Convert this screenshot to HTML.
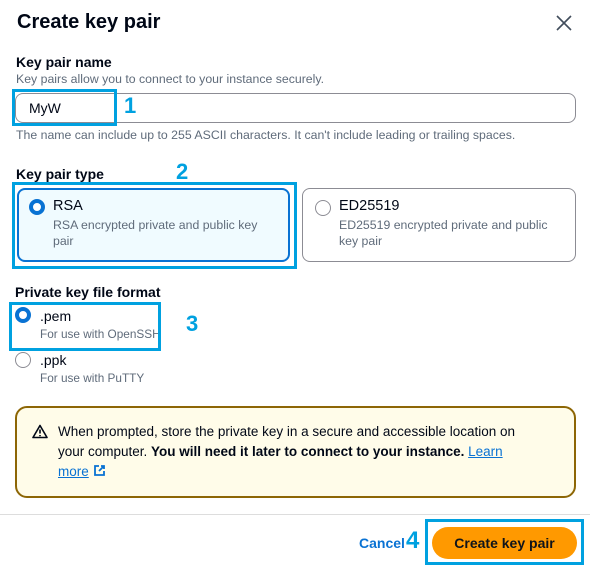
<!DOCTYPE html>
<html><head><meta charset="utf-8"><style>
*{margin:0;padding:0;box-sizing:border-box}
body{width:590px;height:565px;background:#fff;font-family:"Liberation Sans",sans-serif;color:#000716;position:relative;overflow:hidden}
.a{position:absolute;white-space:nowrap}
.lbl{font-size:14px;font-weight:bold}
.hint{font-size:12.3px;color:#5f6b7a}
.ann{position:absolute;border:3px solid #00a1e0}
.num{position:absolute;color:#00a1e0;font-weight:bold;font-size:22px}
.tile{position:absolute;border:1px solid #8c8c94;border-radius:8px}
.rad{position:absolute;width:16px;height:16px;border-radius:50%;border:1px solid #8c8c94;background:#fff}
.rad.on{border:4.5px solid #0972d3}
</style></head><body>
<div class="a" style="left:17px;top:11px;font-size:20px;font-weight:bold">Create key pair</div>
<svg class="a" style="left:555px;top:14px" width="18" height="18"><path d="M2 2L16 16M16 2L2 16" stroke="#414d5c" stroke-width="1.6"/></svg>
<div class="a lbl" style="left:16px;top:54px">Key pair name</div>
<div class="a hint" style="left:16px;top:72px">Key pairs allow you to connect to your instance securely.</div>
<div class="a" style="left:15px;top:93px;width:561px;height:30px;border:1px solid #8c8c94;border-radius:8px"></div>
<div class="a" style="left:29px;top:100px;font-size:14px">MyW</div>
<div class="ann" style="left:12px;top:89px;width:105px;height:37px"></div>
<div class="num" style="left:124px;top:93px">1</div>
<div class="a hint" style="left:16px;top:128px">The name can include up to 255 ASCII characters. It can't include leading or trailing spaces.</div>
<div class="a lbl" style="left:16px;top:166px">Key pair type</div>
<div class="num" style="left:176px;top:159px">2</div>
<div class="tile" style="left:17px;top:188px;width:273px;height:74px;border:2px solid #0972d3;background:#f0fbff"></div>
<div class="rad on" style="left:29px;top:199px"></div>
<div class="a" style="left:53px;top:198px;font-size:14.5px">RSA</div>
<div class="a hint" style="left:53px;top:217px;line-height:16px;white-space:normal;width:225px">RSA encrypted private and public key pair</div>
<div class="ann" style="left:12px;top:182px;width:285px;height:87px"></div>
<div class="tile" style="left:302px;top:188px;width:274px;height:74px"></div>
<div class="rad" style="left:315px;top:200px"></div>
<div class="a" style="left:339px;top:198px;font-size:14.5px">ED25519</div>
<div class="a hint" style="left:339px;top:217px;line-height:16px;white-space:normal;width:225px">ED25519 encrypted private and public key pair</div>
<div class="a lbl" style="left:15px;top:284px">Private key file format</div>
<div class="rad on" style="left:15px;top:307px"></div>
<div class="a" style="left:40px;top:308px;font-size:14px">.pem</div>
<div class="a hint" style="left:40px;top:327px;font-size:11.8px">For use with OpenSSH</div>
<div class="ann" style="left:9px;top:302px;width:152px;height:49px"></div>
<div class="num" style="left:186px;top:311px">3</div>
<div class="rad" style="left:15px;top:352px"></div>
<div class="a" style="left:40px;top:352px;font-size:14px">.ppk</div>
<div class="a hint" style="left:40px;top:371px;font-size:11.8px">For use with PuTTY</div>
<div class="a" style="left:15px;top:406px;width:561px;height:92px;background:#fffce9;border:2px solid #8d6605;border-radius:12px"></div>
<svg class="a" style="left:32px;top:424px" width="16" height="15"><path d="M8 1.5L1 13.5H15Z" fill="none" stroke="#000716" stroke-width="1.6" stroke-linejoin="round"/><path d="M8 5.5V9.5M8 11V12.3" stroke="#000716" stroke-width="1.6"/></svg>
<div class="a" style="left:58px;top:422px;font-size:13.5px;line-height:20px;white-space:normal;width:465px">When prompted, store the private key in a secure and accessible location on your computer. <b>You will need it later to connect to your instance.</b> <span style="color:#0972d3;text-decoration:underline">Learn more</span> <svg width="13" height="13" style="vertical-align:-1px"><path d="M6 2H2V11H11V7M8 2H11V5M11 2L6 7" fill="none" stroke="#0972d3" stroke-width="1.8"/></svg></div>
<div class="a" style="left:0;top:514px;width:590px;height:1px;background:#ddd"></div>
<div class="a" style="left:359px;top:535px;font-size:14px;font-weight:bold;color:#0972d3">Cancel</div>
<div class="num" style="left:406px;top:527px;font-size:24px">4</div>
<div class="a" style="left:432px;top:527px;width:145px;height:32px;background:#ff9900;border-radius:16px;font-size:14px;font-weight:bold;text-align:center;line-height:32px;color:#0f141a">Create key pair</div>
<div class="ann" style="left:425px;top:519px;width:159px;height:46px"></div>
</body></html>
